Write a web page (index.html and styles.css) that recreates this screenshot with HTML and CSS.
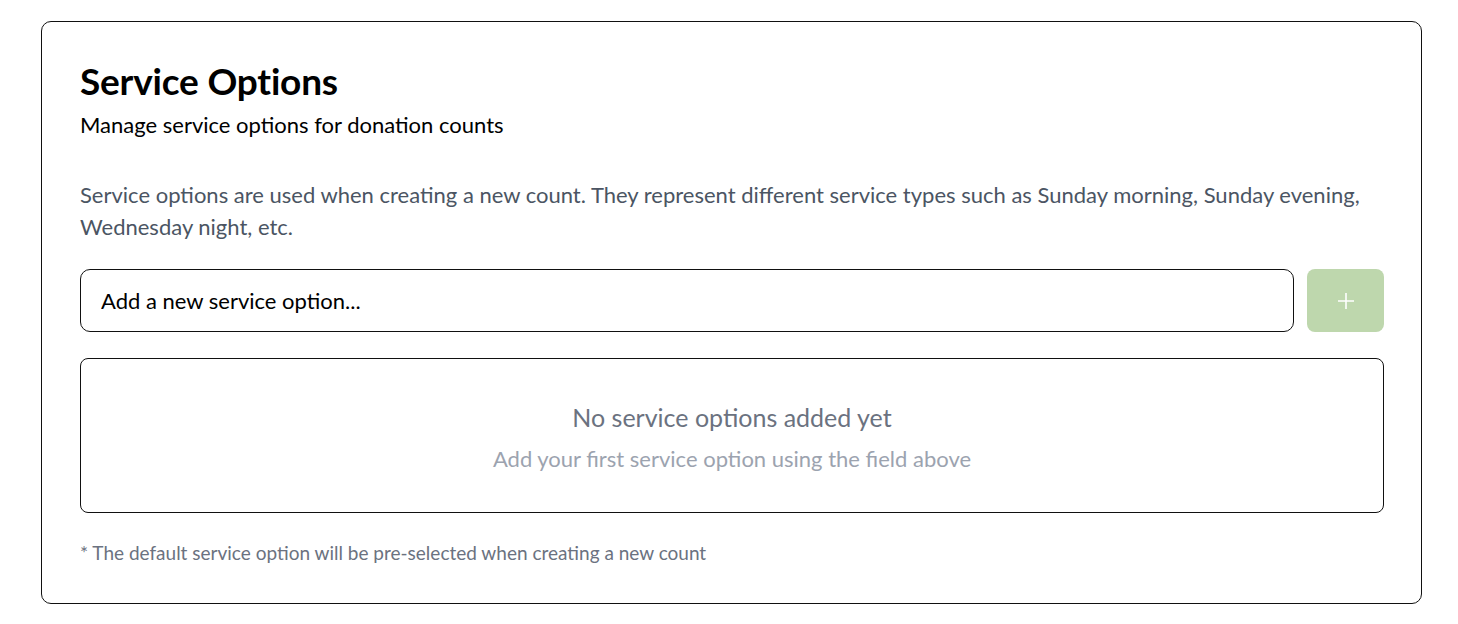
FILE: index.html
```
<!DOCTYPE html>
<html>
<head>
<meta charset="utf-8">
<link rel="stylesheet" href="styles.css">
</head>
<body>
<div class="card">
  <h1 class="title">Service Options</h1>
  <p class="subtitle">Manage service options for donation counts</p>
  <p class="desc">Service options are used when creating a new count. They represent different service types such as Sunday morning, Sunday evening, Wednesday night, etc.</p>
  <div class="add-row">
    <input class="input" type="text" placeholder="Add a new service option...">
    <button class="add-btn" type="button" aria-label="Add">
      <svg width="18" height="18" viewBox="0 0 18 18"><path d="M9 1v16M1 9h16" stroke="#fff" stroke-width="1.6" fill="none"/></svg>
    </button>
  </div>
  <div class="empty">
    <div class="empty-title">No service options added yet</div>
    <div class="empty-sub">Add your first service option using the field above</div>
  </div>
  <p class="note">* The default service option will be pre-selected when creating a new count</p>
</div>
</body>
</html>
```
FILE: styles.css
```
* { box-sizing: border-box; }
html, body { margin: 0; padding: 0; background: #fff; }
body { font-family: Lato, "Noto Sans", sans-serif; color: #000; padding: 21px 36px 0 41px; }
.card {
  width: 1381px;
  height: 583px;
  border: 1px solid #111;
  border-radius: 10px;
  padding: 37px 37px 0 38px;
}
.title { margin: 0; font-size: 37px; font-weight: 700; line-height: 44px; letter-spacing: -0.2px; }
.subtitle { margin: 7px 0 0; font-size: 22px; line-height: 30px; }
.desc { margin: 39px 0 0; font-size: 22px; line-height: 32px; color: #4b5563; }
.add-row { display: flex; gap: 13px; margin-top: 26px; }
.input {
  flex: 1;
  height: 63px;
  border: 1px solid #111;
  border-radius: 10px;
  padding: 0 20px;
  font-family: inherit;
  font-size: 22px;
  outline: none;
}
.input::placeholder { color: #000; }
.add-btn {
  width: 77px; height: 63px;
  border: none; border-radius: 8px;
  background: #bed7ad;
  display: flex; align-items: center; justify-content: center;
  padding: 0;
}
.empty {
  margin-top: 26px;
  height: 155px;
  border: 1px solid #111;
  border-radius: 8px;
  padding-top: 3px;
  display: flex; flex-direction: column; align-items: center; justify-content: center;
  gap: 12px;
}
.empty-title { font-size: 25px; line-height: 32px; color: #6b7280; }
.empty-sub { font-size: 22px; line-height: 28px; color: #9ca3af; }
.note { margin: 28px 0 0; font-size: 19px; line-height: 24px; color: #6b7280; }
```
